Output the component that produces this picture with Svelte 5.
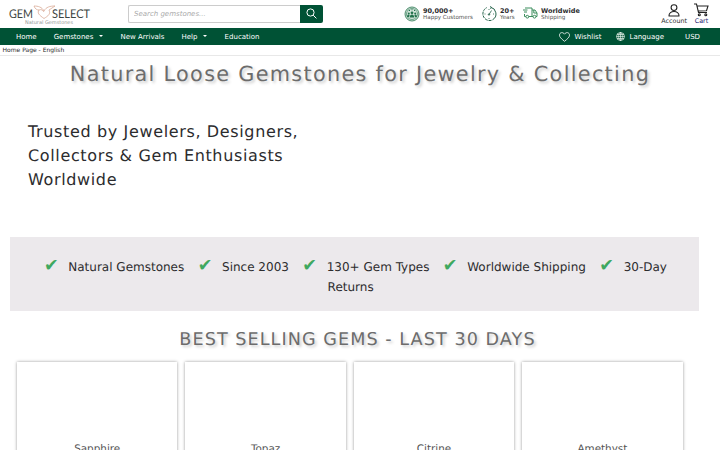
<script>
    const features = ["Natural Gemstones", "Since 2003", "130+ Gem Types", "Worldwide Shipping", "30-Day Returns"];
    const gems = ["Sapphire", "Topaz", "Citrine", "Amethyst"];

    let search = $state("");
</script>

<header>
    <a class="logo" href="#home" aria-label="Gem Select">
        <svg width="84" height="21" viewBox="0 0 84 21">
            <text class="brand" x="1" y="12.7" textLength="24" lengthAdjust="spacingAndGlyphs">GEM</text>
            <text class="brand" x="44" y="12.7" textLength="38" lengthAdjust="spacingAndGlyphs">SELECT</text>
            <g fill="none" stroke="#d9ab97" stroke-width="0.8">
                <path d="M36 13.5C31 10 29 8 31 5c-2 0-4-1-5-4 4 0 8 1 10 5 2-4 6-5 11-5-2 1-4 3-6 4 2 4-1 6-5 8.5" />
                <path d="M31 5c2-1 4 0 5 2" />
            </g>
            <text class="tagline" x="17" y="19" textLength="48" lengthAdjust="spacingAndGlyphs">Natural Gemstones</text>
        </svg>
    </a>

    <form class="search" onsubmit={(e) => e.preventDefault()}>
        <input type="text" placeholder="Search gemstones..." bind:value={search} />
        <button aria-label="Search">
            <svg width="11" height="11" viewBox="0 0 11 11" fill="none" stroke="#fff" stroke-width="1">
                <circle cx="4.5" cy="4.5" r="3.6" />
                <path d="M7.2 7.2 10.4 10.4" />
            </svg>
        </button>
    </form>

    <div class="trust">
        <div class="trust-item customers">
            <svg width="16" height="16" viewBox="0 0 16 16" fill="none" stroke="#24734d">
                <circle cx="8" cy="8" r="7" fill="#d5e6dc" stroke-width="0.8" />
                <circle cx="8" cy="8" r="5.5" stroke-width="0.6" />
                <g fill="#24734d" stroke="none">
                    <circle cx="8" cy="6.8" r="1.4" />
                    <circle cx="4.8" cy="7.5" r="1" />
                    <circle cx="11.2" cy="7.5" r="1" />
                    <path d="M5.7 11.5c0-4 4.6-4 4.6 0zM3 11c0-3 2-3 2.7-2l-.7 2zM13 11c0-3-2-3-2.7-2l.7 2z" />
                    <path d="M5 4h1v1H5zM7.5 3.2h1v1h-1zM10 4h1v1h-1z" />
                </g>
            </svg>
            <div><b>90,000+</b><span>Happy Customers</span></div>
        </div>
        <div class="trust-item years">
            <svg width="16" height="16" viewBox="0 0 16 16" fill="none" stroke="#24634a" stroke-width="1">
                <path d="M9.5 1.2A6.8 6.8 0 0 1 11.5 13.8" />
                <path d="M10.5 14.3A6.8 6.8 0 0 1 6 1.5" stroke-dasharray="3 .8" />
                <path d="M8 8.5 10.5 4.5M8 3v1M3.5 8h1M8 12v1M12 8h1" stroke-width="0.8" />
                <path d="m9 0 1.5 1.2L9.3 3" stroke-width="0.7" />
                <circle cx="8" cy="8.5" r="0.7" />
            </svg>
            <div><b>20+</b><span>Years</span></div>
        </div>
        <div class="trust-item">
            <svg width="15" height="14" viewBox="0 0 15 14" fill="none" stroke="#3a8d5c" stroke-width="1">
                <path d="M2 2h7v8.5H5.8M2.8 10.5H1.5V8M9 4h3l2 3v3.5h-1M10 10.5H9M10.8 4v3H14" />
                <path d="M0 4h4.5M1 6h3" />
                <circle cx="4.3" cy="10.7" r="1.4" />
                <circle cx="11.5" cy="10.7" r="1.4" />
            </svg>
            <div><b>Worldwide</b><span>Shipping</span></div>
        </div>
    </div>

    <div class="user">
        <a class="account" href="#account">
            <svg width="12" height="13" viewBox="0 0 12 13" fill="none" stroke="#222" stroke-width="1.1">
                <circle cx="6" cy="3.6" r="2.9" />
                <path d="M1 12c-.5-6 10.5-6 10 0z" stroke-linejoin="round" />
            </svg>
            Account
        </a>
        <a class="cart" href="#cart">
            <svg width="15" height="14" viewBox="0 0 15 14" fill="none" stroke="#222" stroke-width="1.1">
                <path d="M0 1h2.5l2 8.5H13M3 3h11l-1.5 4.7L4.3 8" />
                <circle cx="5.3" cy="11.8" r="1" />
                <circle cx="11.8" cy="11.8" r="1" />
            </svg>
            Cart
        </a>
    </div>
</header>

<nav>
    <a href="#home">Home</a>
    <a href="#gemstones">Gemstones <i class="caret"></i></a>
    <a href="#new">New Arrivals</a>
    <a href="#help">Help <i class="caret"></i></a>
    <a href="#education">Education</a>
    <div class="nav-right">
        <a href="#wishlist">
            <svg width="11" height="10" viewBox="0 0 11 10" fill="none" stroke="#fff" stroke-width="0.8">
                <path d="M5.5 9.3C2 6.5.5 5 .5 3.1.5.3 4-.3 5.5 2.2 7-.3 10.5.3 10.5 3.1c0 1.9-1.5 3.4-5 6.2z" />
            </svg>
            Wishlist
        </a>
        <a href="#language">
            <svg width="9" height="9" viewBox="0 0 9 9" fill="none" stroke="#e5f0ea" stroke-width="0.7">
                <circle cx="4.5" cy="4.5" r="4" />
                <ellipse cx="4.5" cy="4.5" rx="1.9" ry="4" />
                <path d="M.5 4.5h8M1 2.5h7M1 6.5h7M4.5 0v9" />
            </svg>
            Language
        </a>
        <a class="currency" href="#currency">USD</a>
    </div>
</nav>

<div class="breadcrumb">Home Page - English</div>

<main>
    <h1>Natural Loose Gemstones for Jewelry &amp; Collecting</h1>

    <p class="intro">Trusted by Jewelers, Designers, Collectors &amp; Gem Enthusiasts Worldwide</p>

    <div class="features">
        {#each features as feature}
            <span class="check">✔</span>{feature + " "}
        {/each}
    </div>

    <h2>BEST SELLING GEMS - LAST 30 DAYS</h2>

    <div class="gems">
        {#each gems as gem}
            <div class="gem">{gem}</div>
        {/each}
    </div>
</main>

<style>
    :global(body) {
        height: 450px;
        overflow: hidden;
        background: #fff;
        color: #2c2c2e;
        font-family: "DejaVu Sans", sans-serif;
        text-rendering: geometricPrecision;
    }

    a {
        color: inherit;
        text-decoration: none;
    }

    svg {
        display: block;
        flex: none;
    }

    header {
        display: flex;
        box-sizing: border-box;
        height: 28px;
        padding-left: 8px;
    }

    .logo {
        width: 120px;
        padding-top: 5px;
    }

    .brand {
        fill: #3c4542;
        font: 12px Lato, sans-serif;
    }

    .tagline {
        fill: #929795;
        font: 5px "DejaVu Sans", sans-serif;
    }

    .search {
        display: flex;
        width: 195px;
        height: 17.5px;
        margin-top: 5px;
    }

    .search input {
        box-sizing: border-box;
        width: 172px;
        padding: 0 5px;
        border: 1px solid #ccc;
        border-right: 0;
        border-radius: 2px 0 0 2px;
        font: italic 7px "DejaVu Sans", sans-serif;
        outline: none;
    }

    .search input::placeholder {
        color: #aaa;
    }

    .search button {
        display: flex;
        align-items: center;
        justify-content: center;
        width: 23px;
        padding: 0;
        border: 0;
        border-radius: 0 2px 2px 0;
        background: #005235;
    }

    .trust {
        display: flex;
        margin-left: 81px;
        padding-top: 6px;
    }

    .trust-item {
        display: flex;
        gap: 3px;
        height: 16px;
    }

    .customers {
        width: 77px;
    }

    .years {
        width: 42px;
    }

    .trust-item b,
    .trust-item span {
        display: block;
        white-space: nowrap;
    }

    .trust-item b {
        padding-top: 1px;
        font-size: 6.5px;
        line-height: 8px;
    }

    .trust-item span {
        color: #555;
        font-size: 5.6px;
        line-height: 6px;
    }

    .user {
        display: flex;
        margin-left: auto;
        font-size: 6.4px;
        line-height: 8px;
    }

    .user a {
        display: flex;
        flex-direction: column;
        align-items: center;
    }

    .account {
        padding-top: 4px;
        margin-right: 7px;
    }

    .cart {
        padding-top: 3px;
        margin-right: 11px;
        color: #1c1c70;
    }

    .account svg,
    .cart svg {
        margin-bottom: -0.5px;
    }

    nav {
        display: flex;
        align-items: center;
        gap: 17px;
        height: 17px;
        padding-left: 16px;
        background: #005235;
        color: #fff;
        font-size: 7px;
    }

    .caret {
        display: inline-block;
        margin: 0 1px 2px 3px;
        border: 2px solid transparent;
        border-top-color: #fff;
        border-bottom: 0;
    }

    .nav-right {
        display: flex;
        gap: 15px;
        margin-left: auto;
        padding-right: 20px;
    }

    .nav-right a {
        display: flex;
        align-items: center;
        gap: 4px;
    }

    .nav-right .currency {
        margin-left: 6px;
    }

    .breadcrumb {
        height: 10px;
        padding-left: 2.5px;
        border-bottom: 1px solid #e8e8e8;
        font-size: 6px;
        line-height: 11px;
    }

    h1,
    h2 {
        margin: 0;
        color: #6c6c6c;
        font-weight: normal;
        text-align: center;
        text-shadow: 2px 2px 3px #ccc;
    }

    h1 {
        height: 64px;
        font-size: 20.8px;
        letter-spacing: 1.3px;
        line-height: 36px;
    }

    .intro {
        width: 300px;
        height: 117.4px;
        margin: 0 0 0 28px;
        font-size: 16px;
        letter-spacing: 0.64px;
        line-height: 24px;
    }

    .features {
        box-sizing: border-box;
        width: 689px;
        height: 74px;
        margin-left: 10.4px;
        padding: 20px 24px 0 15.5px;
        background: #ece9ec;
        font-size: 12px;
        line-height: 20px;
        text-align: center;
    }

    .check {
        margin: 0 9.6px;
        color: #3fa85f;
        font-size: 17.6px;
        font-weight: bold;
        line-height: 16px;
    }

    h2 {
        width: 715px;
        height: 50.5px;
        font-size: 17.6px;
        letter-spacing: 1.06px;
        line-height: 58px;
    }

    .gems {
        display: flex;
        gap: 8px;
        padding-left: 17px;
    }

    .gem {
        box-sizing: border-box;
        width: 160.4px;
        height: 110px;
        padding-top: 80px;
        box-shadow: 0 0 3px rgba(0, 0, 0, 0.4);
        color: #555;
        font-size: 10.4px;
        line-height: 14px;
        text-align: center;
    }
</style>
